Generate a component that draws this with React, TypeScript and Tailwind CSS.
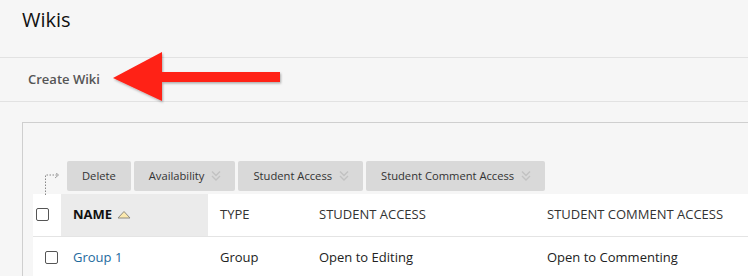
import React from 'react';

const font = { fontFamily: '"Open Sans", "Noto Sans", sans-serif' };

function DoubleChevron() {
  return (
    <svg width="10" height="12" viewBox="0 0 10 12" className="ml-[7px]">
      <path d="M1 1.5 L5 5.5 L9 1.5" fill="none" stroke="#c2c2c2" strokeWidth="1.4" />
      <path d="M1 6 L5 10 L9 6" fill="none" stroke="#c2c2c2" strokeWidth="1.4" />
    </svg>
  );
}

function ActionButton({ label, menu }: { label: string; menu?: boolean }) {
  return (
    <button
      className={
        "h-[30px] bg-[#d9d9d9] rounded-[2px] pl-[15px] flex items-center text-[11.2px] text-[#333] " +
        (menu ? "pr-[14px]" : "pr-[15px]")
      }
    >
      {label}
      {menu && <DoubleChevron />}
    </button>
  );
}

function Checkbox() {
  return <span className="block w-[13px] h-[13px] border border-solid border-[#555] rounded-[2px] bg-white" />;
}

export default function App() {
  return (
    <div className="relative w-[748px] h-[276px] overflow-hidden bg-[#f6f6f6] text-[#222]" style={font}>
      {/* Title */}
      <div className="h-[58px] px-[22px] pt-[5px] border-b border-solid border-[#e2e2e2]">
        <h1 className="text-[20px] text-[#111]">Wikis</h1>
      </div>

      {/* Action bar */}
      <div className="h-[44px] px-[28px] flex items-center border-b border-solid border-[#e2e2e2]">
        <span className="text-[13px] font-semibold text-[#555]">Create Wiki</span>
      </div>

      {/* Red annotation arrow */}
      <svg className="absolute left-[108px] top-[48px]" width="180" height="60" viewBox="0 0 180 60">
        <defs>
          <filter id="sh" x="-10%" y="-20%" width="120%" height="140%">
            <feDropShadow dx="1" dy="1.5" stdDeviation="1.2" floodColor="#000" floodOpacity="0.3" />
          </filter>
        </defs>
        <polygon
          points="5,30 54,4 54,24 172,24 172,34 54,34 54,53"
          fill="#ff2117"
          filter="url(#sh)"
        />
      </svg>

      {/* Wiki list box */}
      <div className="mt-[20px] ml-[22px] border-l border-t border-solid border-[#cfcfcf] h-[200px]">
        <div className="pt-[38px] pl-[44px] flex items-center gap-[3px] relative">
          <svg className="absolute left-[21px] top-[50px]" width="18" height="22" viewBox="0 0 18 22">
            <path d="M1.5 22 V2 H13" fill="none" stroke="#888" strokeWidth="1" strokeDasharray="1.5 1.5" />
            <path d="M11 -1 L14.5 2 L11 5" fill="none" stroke="#888" strokeWidth="0.8" />
          </svg>
          <ActionButton label="Delete" />
          <ActionButton label="Availability" menu />
          <ActionButton label="Student Access" menu />
          <ActionButton label="Student Comment Access" menu />
        </div>

        <table className="ml-[10px] mt-[3px] bg-white border-collapse text-left w-[730px]">
          <thead>
            <tr className="h-[42px] border-b border-solid border-[#e4e4e4]">
              <th className="w-[28px] pl-[3px] align-middle">
                <Checkbox />
              </th>
              <th className="w-[147px] bg-[#ebebeb] pl-[12px] text-[13px] font-bold text-[#111]">
                <span className="flex items-center">
                  NAME
                  <svg width="14" height="9" viewBox="0 0 14 9" className="ml-[5px]">
                    <polygon points="1,8 7,1.5 13,8" fill="#fce9ae" stroke="#8e8a80" strokeWidth="1" />
                  </svg>
                </span>
              </th>
              <th className="w-[99px] pl-[12px] text-[13px] font-normal text-[#333]">TYPE</th>
              <th className="w-[228px] pl-[12px] text-[13px] font-normal text-[#333]">STUDENT ACCESS</th>
              <th className="pl-[12px] text-[13px] font-normal text-[#333]">STUDENT COMMENT ACCESS</th>
            </tr>
          </thead>
          <tbody>
            <tr className="h-[42px]">
              <td className="pl-[12px] align-middle">
                <Checkbox />
              </td>
              <td className="pl-[12px] text-[13px] text-[#1e6a9e]">Group 1</td>
              <td className="pl-[12px] text-[13px]">Group</td>
              <td className="pl-[12px] text-[13px]">Open to Editing</td>
              <td className="pl-[12px] text-[13px]">Open to Commenting</td>
            </tr>
          </tbody>
        </table>
      </div>
    </div>
  );
}
